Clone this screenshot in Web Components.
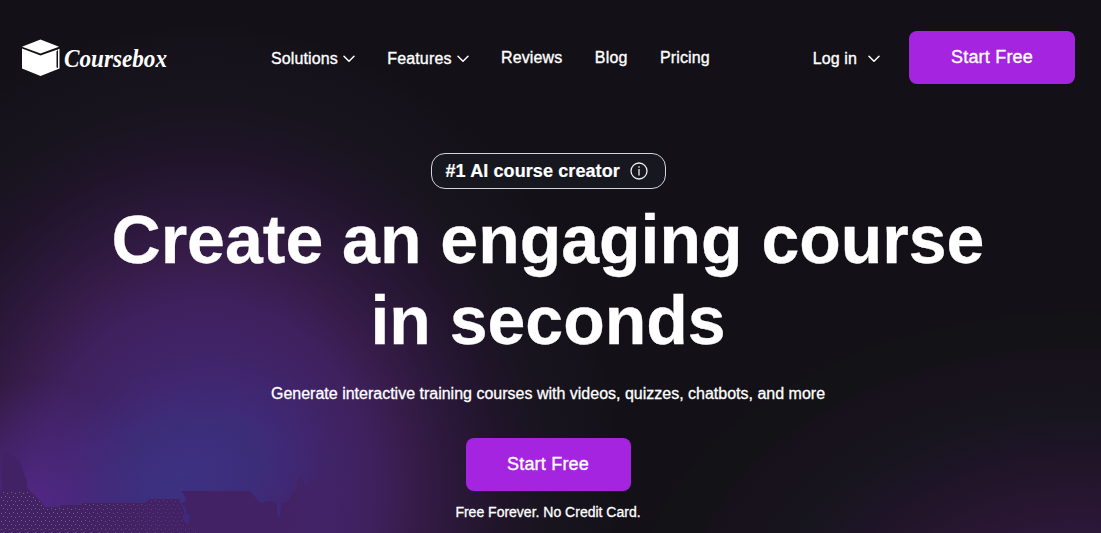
<!DOCTYPE html>
<html lang="en">
<head>
<meta charset="utf-8">
<title>Coursebox</title>
<style>
  body {
    margin: 0;
    background: #131117;
    color: #fff;
    font-family: "Liberation Sans", Arial, sans-serif;
    overflow: hidden;
  }
</style>
</head>
<body>
<course-page>
  <site-header slot="header">
    <nav-item menu style="--ls:.12px">Solutions</nav-item>
    <nav-item menu style="--ls:.14px">Features</nav-item>
    <nav-item style="--ls:.15px">Reviews</nav-item>
    <nav-item style="--ls:.15px">Blog</nav-item>
    <nav-item style="--ls:.15px">Pricing</nav-item>
    <nav-item slot="actions" menu wide style="--ls:.12px">Log in</nav-item>
    <cta-button slot="actions">Start Free</cta-button>
  </site-header>
  <hero-section>
    <hero-badge slot="badge">#1 AI course creator</hero-badge>
    <span slot="title">Create an engaging course<br>in seconds</span>
    <span slot="lead">Generate interactive training courses with videos, quizzes, chatbots, and more</span>
    <cta-button slot="cta">Start Free</cta-button>
    <span slot="note">Free Forever. No Credit Card.</span>
  </hero-section>
</course-page>

<script>
const define = (name, html) => customElements.define(name,
    class extends HTMLElement {
        constructor() {
            super();
            this.attachShadow({ mode: 'open' });
            this.shadowRoot.innerHTML = html;
        }
    });

define('glow-backdrop', `
<style>
  :host {
    position: absolute;
    inset: 0;
    z-index: -1;
  }
  svg { display: block; }
</style>
<svg width="1101" height="533" viewBox="0 0 1101 533">
  <defs>
    <radialGradient id="violet" gradientUnits="userSpaceOnUse" cx="0" cy="0" r="1"
        gradientTransform="translate(205 490) scale(415 465)">
      <stop offset="0" stop-color="#43287a"/>
      <stop offset=".25" stop-color="#41256c"/>
      <stop offset=".4" stop-color="#3f215f"/>
      <stop offset=".5" stop-color="#371c4a"/>
      <stop offset=".6" stop-color="#2b183a"/>
      <stop offset=".71" stop-color="#20142a"/>
      <stop offset=".83" stop-color="#18141e"/>
      <stop offset=".95" stop-color="#16121b"/>
      <stop offset="1" stop-color="#131117"/>
    </radialGradient>
    <radialGradient id="blue" gradientUnits="userSpaceOnUse" cx="0" cy="0" r="1"
        gradientTransform="translate(180 480) rotate(-25) scale(160 110)">
      <stop offset="0" stop-color="#3d3182"/>
      <stop offset=".5" stop-color="#3b2f7b" stop-opacity=".8"/>
      <stop offset="1" stop-color="#41287a" stop-opacity="0"/>
    </radialGradient>
    <radialGradient id="plum" gradientUnits="userSpaceOnUse" cx="0" cy="0" r="1"
        gradientTransform="translate(35 500) scale(110 120)">
      <stop offset="0" stop-color="#512884"/>
      <stop offset="1" stop-color="#4c2880" stop-opacity="0"/>
    </radialGradient>
    <radialGradient id="corner" gradientUnits="userSpaceOnUse" cx="0" cy="0" r="1"
        gradientTransform="translate(1080 620) scale(450 308)">
      <stop offset=".3" stop-color="#2b1738"/>
      <stop offset=".4" stop-color="#27162f"/>
      <stop offset=".55" stop-color="#1e1427"/>
      <stop offset=".68" stop-color="#17151e"/>
      <stop offset=".76" stop-color="#17131c"/>
      <stop offset=".87" stop-color="#17111b"/>
      <stop offset=".89" stop-color="#131317"/>
      <stop offset=".98" stop-color="#131317"/>
      <stop offset="1" stop-color="#131117"/>
    </radialGradient>
    <pattern id="dots" width="8" height="8" patternUnits="userSpaceOnUse">
      <path d="M1 1h1v1h-1zM5 0h1v1h-1zM3 4h1v1h-1zM7 5h1v1h-1z" fill="#74627a"/>
    </pattern>
    <linearGradient id="fade"><stop offset=".35" stop-color="#fff"/><stop offset="1" stop-color="#fff" stop-opacity=".2"/></linearGradient>
    <linearGradient id="ground" gradientUnits="userSpaceOnUse" x1="290" y1="0" x2="350" y2="0">
      <stop offset="0" stop-color="#422264"/>
      <stop offset="1" stop-color="#422264" stop-opacity="0"/>
    </linearGradient>
    <mask id="dotmask"><rect y="480" width="205" height="53" fill="url(#fade)"/></mask>
  </defs>
  <rect width="1101" height="533" fill="#131117"/>
  <rect width="640" height="533" fill="url(#violet)"/>
  <rect width="400" height="533" fill="url(#blue)"/>
  <rect width="200" height="533" fill="url(#plum)"/>
  <rect x="620" y="300" width="481" height="233" fill="url(#corner)"/>
  <path fill="url(#ground)" d="M2 453L6 451 13 455 19 461 23 469 24 475 27 480 27 487 31 492 39 499 45 507 60 507 60 505 82 505 82 503 144 503 150 499 180 499 180 504 186 501 184 495 181 491 250 491 256 498 260 503 268 501 276 502 278 510 282 503 289 501 292 493 297 489 297 480 301 475 304 484 318 478 350 470V533H0V491L2 489z"/>
  <path mask="url(#dotmask)" fill="url(#dots)" d="M0 491H27L37 498 45 508 60 507V506H82V504H144L150 500H180L188 524 202 533H0z"/>
  <path fill="#40297a" d="M181 503l5 4 1 7 4 1-3 9-6-4 2-8zM277 502l4 3-1 9-2 5-1-8z"/>
</svg>
`);

define('course-page', `
<style>
  :host {
    display: flex;
    flex-direction: column;
    position: relative;
    isolation: isolate;
    width: 1101px;
    height: 533px;
    overflow: hidden;
  }
</style>
<glow-backdrop></glow-backdrop>
<slot name="header"></slot>
<slot></slot>
`);

define('brand-logo', `
<style>
  :host { display: block; width: 249px; height: 40px; }
  svg { display: block; overflow: visible; }
  text {
    font: italic bold 25px "Liberation Serif", serif;
    fill: #fff;
  }
</style>
<svg width="200" height="40" viewBox="0 0 200 40" fill="#fff">
  <path d="M18.500 1.500L37 8.800 18.500 15.500 0 8.800z"/>
  <path d="M0 10.500l18.500 7L35.500 11.500V13h-1v16.500l1.500.5V11.300l1.500-.5V30.500L18.500 38 0 30.500z"/>
  <text x="42" y="28.500" textLength="103" lengthAdjust="spacingAndGlyphs">Coursebox</text>
</svg>
`);

define('nav-item', `
<style>
  :host {
    display: flex;
    align-items: center;
    gap: 5px;
    height: 20px;
    font-size: 16px;
    line-height: 20px;
    letter-spacing: var(--ls, 0);
    -webkit-text-stroke: .35px #fff;
    white-space: nowrap;
  }
  :host([menu]) { padding-top: 2px; }
  :host([wide]) { gap: 11px; }
  svg { display: none; }
  :host([menu]) svg { display: block; }
</style>
<slot></slot>
<svg width="12" height="8" viewBox="0 0 12 8" fill="none" stroke="#fff" stroke-width="1.500" stroke-linecap="round" stroke-linejoin="round">
  <path d="M1 1.300l5 5 5-5"/>
</svg>
`);

define('cta-button', `
<style>
  :host {
    display: flex;
    justify-content: center;
    box-sizing: border-box;
    width: 165px;
    height: 53px;
    padding-top: 15px;
    border-radius: 8px;
    background: #a524df;
    font-size: 18px;
    line-height: 22px;
    letter-spacing: .2px;
    -webkit-text-stroke: .35px #fff;
  }
</style>
<slot></slot>
`);

define('site-header', `
<style>
  :host {
    display: flex;
    align-items: center;
    height: 53px;
    padding: 31px 26px 0 22px;
  }
  nav {
    display: flex;
    align-items: center;
    gap: 32.4px;
  }
  .actions {
    display: flex;
    align-items: center;
    gap: 29px;
    margin-left: auto;
  }
  ::slotted(cta-button) { width: 166px; }
</style>
<brand-logo></brand-logo>
<nav><slot></slot></nav>
<div class="actions"><slot name="actions"></slot></div>
`);

define('hero-badge', `
<style>
  :host {
    display: flex;
    align-items: center;
    gap: 10px;
    box-sizing: border-box;
    width: 235px;
    height: 36px;
    padding-left: 14px;
    border: 1px solid #d5d2d8;
    border-radius: 14px;
    background: #171720;
    font-size: 18px;
    font-weight: bold;
    letter-spacing: .1px;
    -webkit-text-stroke: .2px #fff;
    white-space: nowrap;
  }
</style>
<slot></slot>
<svg width="18" height="18" viewBox="0 0 18 18" fill="none" stroke="#eee" stroke-width="1.300">
  <circle cx="9" cy="9" r="8"/>
  <path d="M9 7v6.500M9 4.200v1.500"/>
</svg>
`);

define('hero-section', `
<style>
  :host {
    display: flex;
    flex-direction: column;
    align-items: center;
    padding: 69px 5px 0 0;
  }
  h1 {
    margin: 10px 0 0;
    font-size: 68px;
    line-height: 81px;
    text-align: center;
    -webkit-text-stroke: .3px #fff;
  }
  .lead {
    margin: 23px 0 34px;
    font-size: 16px;
    line-height: 20px;
    -webkit-text-stroke: .3px #fff;
  }
  .note {
    margin: 12px 0 0;
    font-size: 14px;
    line-height: 18px;
    -webkit-text-stroke: .3px #fff;
  }
</style>
<slot name="badge"></slot>
<h1><slot name="title"></slot></h1>
<p class="lead"><slot name="lead"></slot></p>
<slot name="cta"></slot>
<p class="note"><slot name="note"></slot></p>
`);
</script>
</body>
</html>
